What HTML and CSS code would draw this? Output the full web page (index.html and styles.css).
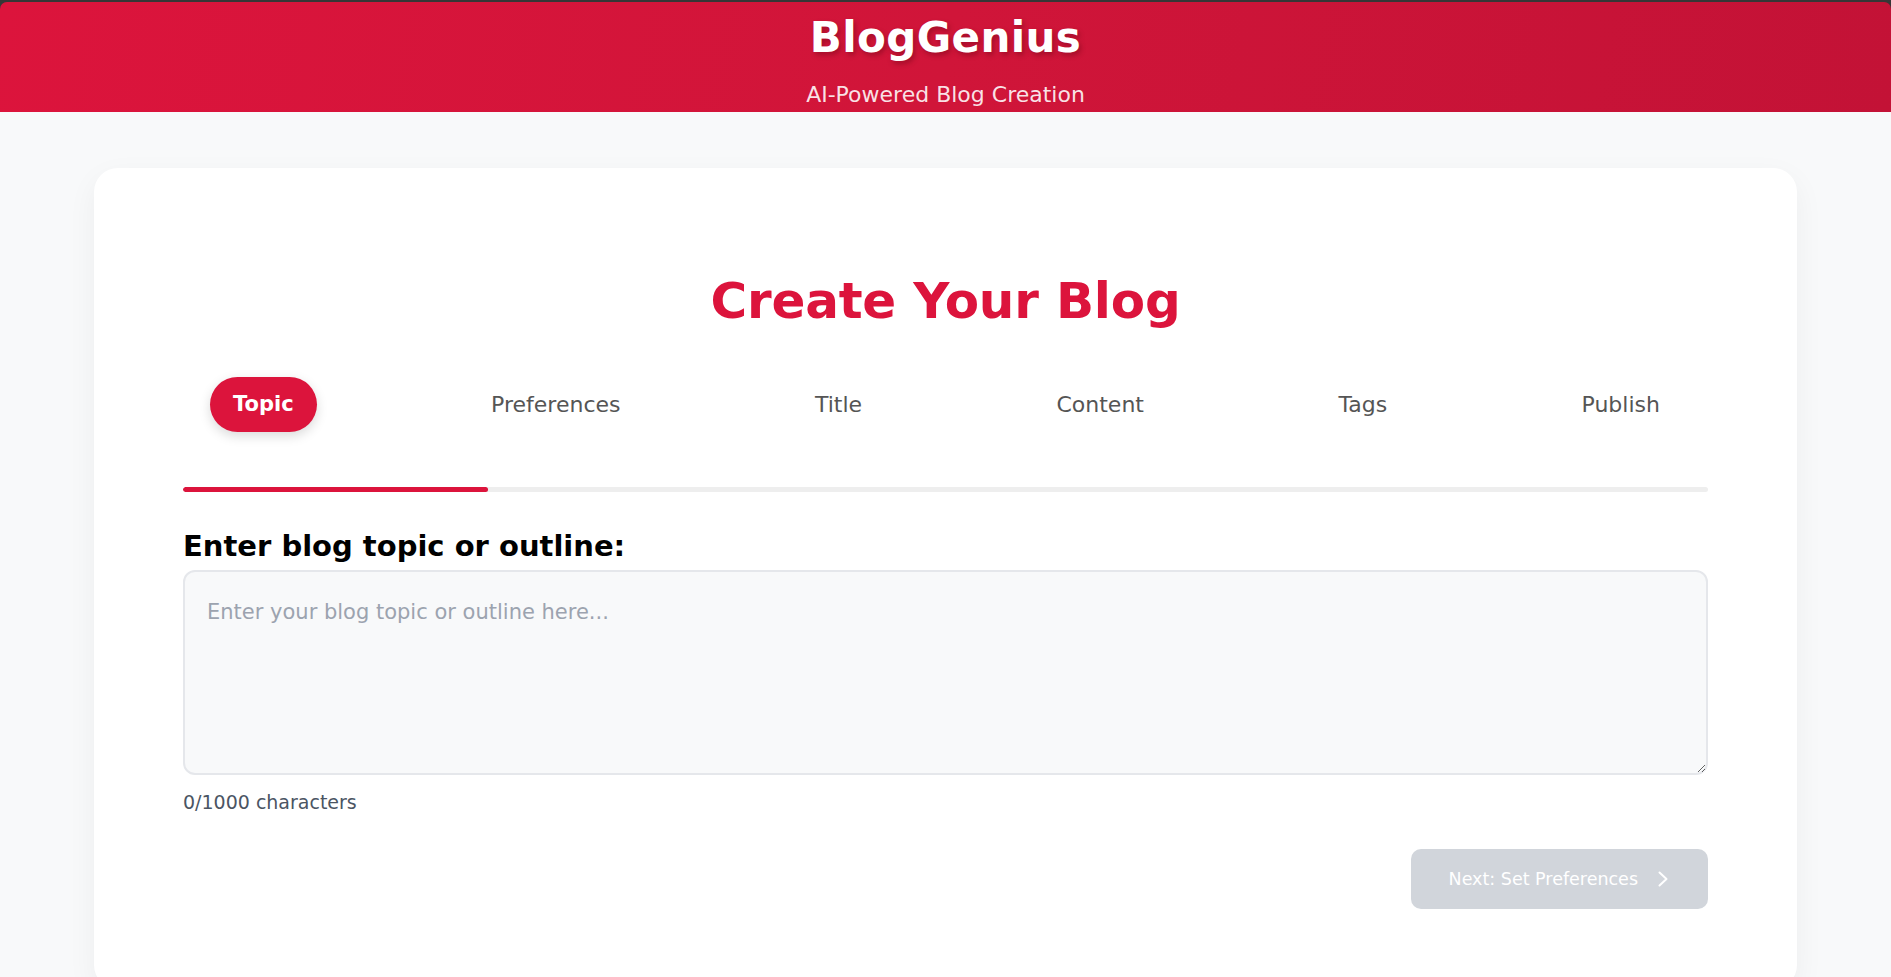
FILE: index.html
```html
<!DOCTYPE html>
<html lang="en">
<head>
<meta charset="utf-8">
<title>BlogGenius</title>
<link rel="stylesheet" href="styles.css">
</head>
<body>
  <header class="site-header">
    <h1 class="brand">BlogGenius</h1>
    <p class="tagline">AI-Powered Blog Creation</p>
  </header>
  <main class="page">
    <section class="card">
      <h2 class="card-title">Create Your Blog</h2>
      <nav class="steps">
        <span class="step active">Topic</span>
        <span class="step">Preferences</span>
        <span class="step">Title</span>
        <span class="step">Content</span>
        <span class="step">Tags</span>
        <span class="step">Publish</span>
      </nav>
      <div class="progress"><div class="progress-fill" style="width:20%"></div></div>
      <label class="field-label" for="topic">Enter blog topic or outline:</label>
      <textarea id="topic" class="topic-input" placeholder="Enter your blog topic or outline here..."></textarea>
      <div class="char-count">0/1000 characters</div>
      <div class="actions">
        <button class="next-btn" disabled>
          <span>Next: Set Preferences</span>
          <svg class="chev" width="10" height="16" viewBox="0 0 10 16" aria-hidden="true"><path d="M1.5 1.5 L8.5 8 L1.5 14.5" fill="none" stroke="#fff" stroke-width="2" stroke-linecap="round" stroke-linejoin="round"/></svg>
        </button>
      </div>
    </section>
  </main>
</body>
</html>
```
FILE: styles.css
```css
* { box-sizing: border-box; }
html, body { margin: 0; padding: 0; }
body {
  background: #363636;
  padding-top: 2px;
  font-family: "DejaVu Sans", "Noto Sans", sans-serif;
  color: #222;
  overflow: hidden;
}
.site-header {
  background: linear-gradient(100deg, #dc143c 0%, #d01539 50%, #c31236 100%);
  border-radius: 7px 7px 0 0;
  text-align: center;
  color: #fff;
  padding: 11px 0 2px;
}
.brand {
  margin: 0;
  font-size: 42px;
  line-height: 50px;
  font-weight: 700;
  letter-spacing: 0.4px;
  text-shadow: 2px 3px 5px rgba(80, 0, 15, 0.35);
}
.tagline {
  margin: 17px 0 0;
  font-size: 22px;
  line-height: 30px;
  color: rgba(255, 255, 255, 0.88);
}
.page {
  background: #f8f9fa;
  min-height: calc(100vh - 112px);
  padding: 56px 94px 0;
}
.card {
  background: #fff;
  border-radius: 24px;
  box-shadow: 0 10px 30px rgba(0, 0, 0, 0.05);
  padding: 103px 89px 80px;
}
.card-title {
  margin: 0;
  text-align: center;
  color: #dc143c;
  font-size: 50px;
  line-height: 60px;
  font-weight: 700;
  letter-spacing: -0.2px;
}
.steps {
  display: flex;
  justify-content: space-between;
  align-items: center;
  padding: 0 28px 0 27px;
  margin-top: 46px;
}
.step {
  padding: 11px 20px;
  font-size: 22px;
  line-height: 33px;
  color: #555;
  border-radius: 30px;
}
.step.active {
  background: #dc143c;
  color: #fff;
  font-weight: 700;
  font-size: 21px;
  padding: 11px 23px;
  box-shadow: 0 4px 12px rgba(0, 0, 0, 0.15);
}
.progress {
  margin-top: 55px;
  height: 5px;
  border-radius: 3px;
  background: #eeeeee;
  overflow: hidden;
}
.progress-fill {
  height: 100%;
  background: #dc143c;
  border-radius: 3px;
}
.field-label {
  display: block;
  margin-top: 36px;
  font-size: 29px;
  line-height: 36px;
  font-weight: 700;
  color: #000;
}
.topic-input {
  display: block;
  width: 100%;
  height: 205px;
  margin-top: 6px;
  padding: 25px 22px 22px;
  border: 2px solid #e5e7eb;
  border-radius: 12px;
  background: #f8f9fa;
  font-family: inherit;
  font-size: 21px;
  line-height: 31px;
  color: #333;
  resize: vertical;
}
.topic-input::placeholder { color: #9ca3af; }
.char-count {
  margin-top: 13px;
  font-size: 19px;
  line-height: 28px;
  color: #4b5563;
}
.actions {
  display: flex;
  justify-content: flex-end;
  margin-top: 33px;
}
.next-btn {
  display: flex;
  align-items: center;
  gap: 20px;
  height: 60px;
  padding: 0 40px 0 38px;
  border: none;
  border-radius: 10px;
  background: #d1d5db;
  color: #fff;
  font-family: inherit;
  font-size: 17.5px;
  line-height: 26px;
}
.chev { display: block; }
```
